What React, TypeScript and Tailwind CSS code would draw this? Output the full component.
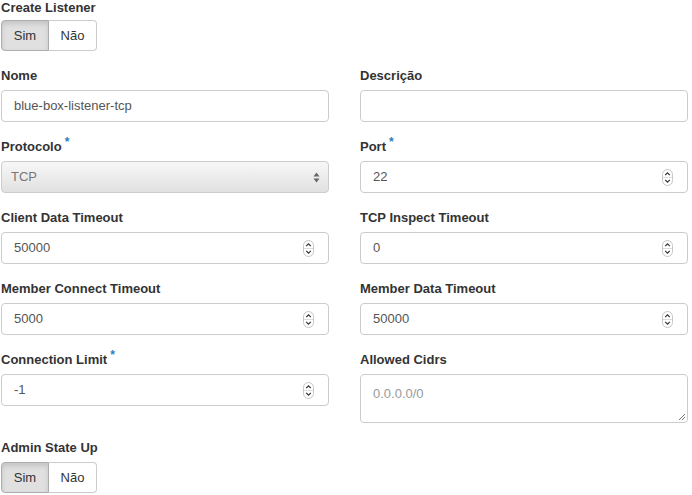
import React from "react";

const font = { fontFamily: '"Liberation Sans", Arial, sans-serif' };

const Req = () => <span className="text-[#2c7ec4] text-[12px] ml-[3px] relative -top-[5px]">*</span>;

const Label = ({ text, required }: { text: string; required?: boolean }) => (
  <div className="text-[13px] leading-[18px] font-bold text-[#333] mb-[5px]">
    {text}
    {required && <Req />}
  </div>
);

const Spinner = () => (
  <svg width="11" height="17" viewBox="0 0 11 17" className="shrink-0">
    <rect x="0.5" y="0.5" width="10" height="16" rx="5" fill="#fff" stroke="#c6c6c6" />
    <line x1="1" y1="8.5" x2="10" y2="8.5" stroke="#dcdcdc" />
    <path d="M3.2 6.2 L5.5 3.8 L7.8 6.2" fill="none" stroke="#333" strokeWidth="1.2" />
    <path d="M3.2 10.8 L5.5 13.2 L7.8 10.8" fill="none" stroke="#333" strokeWidth="1.2" />
  </svg>
);

const NumberInput = ({ value }: { value: string }) => (
  <div className="h-[32px] border border-[#ccc] rounded-[4px] bg-white flex items-center pl-[12px] pr-[14px]">
    <span className="flex-1 text-[13px] text-[#555]">{value}</span>
    <Spinner />
  </div>
);

const TextInput = ({ value }: { value: string }) => (
  <div className="h-[32px] border border-[#ccc] rounded-[4px] bg-white flex items-center px-[12px]">
    <span className="text-[13px] text-[#555]">{value}</span>
  </div>
);

const Toggle = () => (
  <div className="flex text-[13px] text-[#333]">
    <div className="w-[48px] h-[31px] flex items-center justify-center bg-[#e0e0e0] border border-[#adadad] rounded-l-[4px] shadow-[inset_0_3px_5px_rgba(0,0,0,0.125)]">
      Sim
    </div>
    <div className="w-[48px] h-[31px] flex items-center justify-center bg-white border border-l-0 border-[#ccc] rounded-r-[4px]">
      Não
    </div>
  </div>
);

const Field = ({ children }: { children: React.ReactNode }) => <div className="mb-[16px]">{children}</div>;

export default function App() {
  return (
    <div className="w-[692px] h-[495px] bg-white pl-[1px] overflow-hidden" style={font}>
      <div className="mb-[16px]">
        <div className="text-[13px] leading-[15px] font-bold text-[#333] mb-[5px]">Create Listener</div>
        <Toggle />
      </div>
      <div className="grid grid-cols-[328px_328px] gap-x-[31px] items-start">
        <Field>
          <Label text="Nome" />
          <TextInput value="blue-box-listener-tcp" />
        </Field>
        <Field>
          <Label text="Descrição" />
          <TextInput value="" />
        </Field>

        <Field>
          <Label text="Protocolo" required />
          <div className="h-[32px] border border-[#ccc] rounded-[4px] bg-linear-to-b from-[#f7f7f7] to-[#e1e1e1] flex items-center pl-[9px] pr-[8px]">
            <span className="flex-1 text-[13px] text-[#777]">TCP</span>
            <svg width="7" height="11" viewBox="0 0 7 11">
              <path d="M0.5 4.5 L3.5 0.5 L6.5 4.5 Z" fill="#666" />
              <path d="M0.5 6.5 L3.5 10.5 L6.5 6.5 Z" fill="#666" />
            </svg>
          </div>
        </Field>
        <Field>
          <Label text="Port" required />
          <NumberInput value="22" />
        </Field>

        <Field>
          <Label text="Client Data Timeout" />
          <NumberInput value="50000" />
        </Field>
        <Field>
          <Label text="TCP Inspect Timeout" />
          <NumberInput value="0" />
        </Field>

        <Field>
          <Label text="Member Connect Timeout" />
          <NumberInput value="5000" />
        </Field>
        <Field>
          <Label text="Member Data Timeout" />
          <NumberInput value="50000" />
        </Field>

        <Field>
          <Label text="Connection Limit" required />
          <NumberInput value="-1" />
        </Field>
        <Field>
          <Label text="Allowed Cidrs" />
          <div className="relative h-[49px] border border-[#ccc] rounded-[4px] bg-white px-[12px] pt-[6px]">
            <span className="text-[13px] text-[#999]">0.0.0.0/0</span>
            <svg width="8" height="8" viewBox="0 0 8 8" className="absolute right-[1px] bottom-[1px]">
              <path d="M7 1 L1 7 M7 4 L4 7" stroke="#777" strokeWidth="1" />
            </svg>
          </div>
        </Field>

        <div>
          <Label text="Admin State Up" />
          <Toggle />
        </div>
      </div>
    </div>
  );
}
